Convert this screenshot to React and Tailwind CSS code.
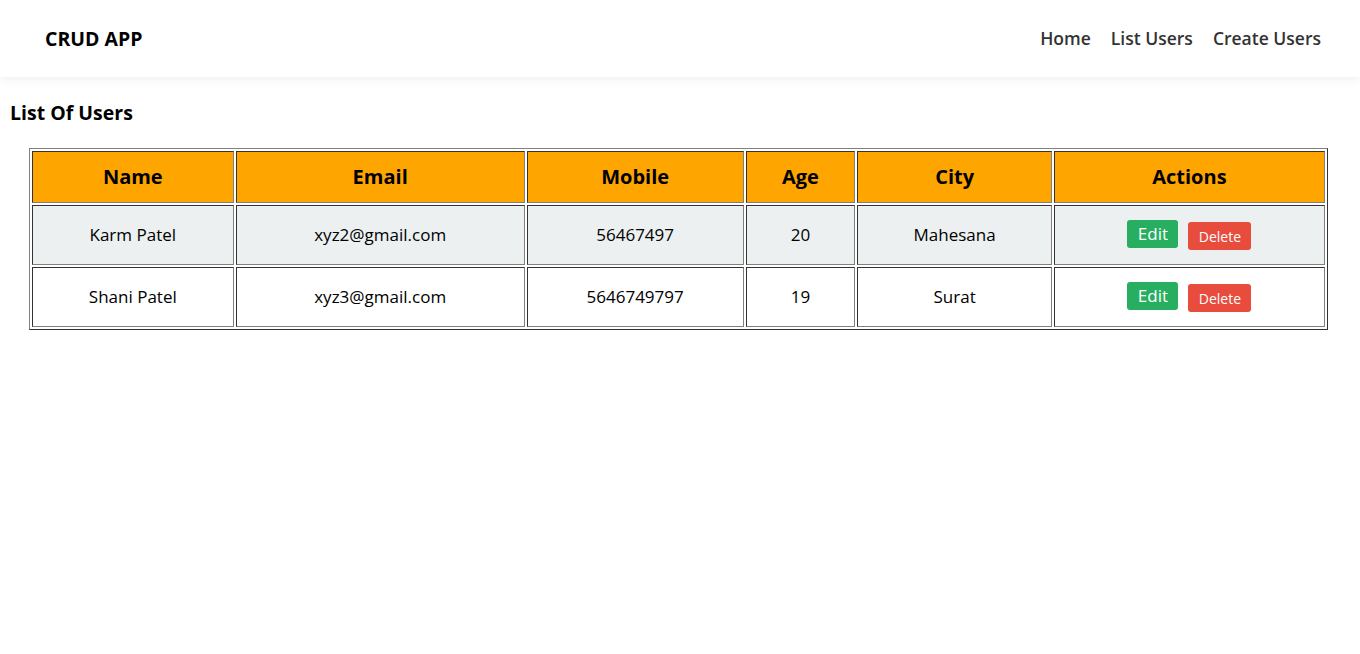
const users = [
  { name: 'Karm Patel', email: 'xyz2@gmail.com', mobile: '56467497', age: 20, city: 'Mahesana' },
  { name: 'Shani Patel', email: 'xyz3@gmail.com', mobile: '5646749797', age: 19, city: 'Surat' }
];

const columns = [
  { label: 'Name', width: 'w-[200px]' },
  { label: 'Email', width: 'w-[287px]' },
  { label: 'Mobile', width: 'w-[215px]' },
  { label: 'Age', width: 'w-[109px]' },
  { label: 'City', width: 'w-[193px]' },
  { label: 'Actions', width: 'w-[269px]' }
];

const cellBorder = 'border border-t-[#333] border-l-[#333] border-b-[#808080] border-r-[#808080]';

export default function App() {
  return (
    <div className="min-h-screen bg-white font-['Open_Sans',sans-serif] text-black">
      {/* Navbar */}
      <nav className="h-[77px] flex items-center justify-between pl-[45px] pr-[39px] bg-white shadow-[0_3px_10px_rgba(0,0,0,0.06)]">
        <span className="text-[19.5px] font-bold">CRUD APP</span>
        <div className="flex items-center gap-[20px] text-[17.5px] font-semibold text-[#333]">
          <a href="#">Home</a>
          <a href="#">List Users</a>
          <a href="#">Create Users</a>
        </div>
      </nav>

      <div className="px-[10px] pt-[22px]">
        <h2 className="text-[19.5px] font-bold leading-[28px]">List Of Users</h2>

        <table className="mt-[21px] ml-[19px] w-[1299px] table-fixed border-separate border-spacing-[2px] border border-t-[#808080] border-l-[#808080] border-b-[#333] border-r-[#333] text-center">
          <thead>
            <tr className="bg-[#ffa500]">
              {columns.map(col => (
                <th key={col.label} className={`${col.width} ${cellBorder} h-[52px] text-[20px] font-bold`}>
                  {col.label}
                </th>
              ))}
            </tr>
          </thead>
          <tbody>
            {users.map((u, i) => (
              <tr key={u.email} className={i === 0 ? 'bg-[#ecf0f1]' : 'bg-white'}>
                <td className={`${cellBorder} h-[60px] text-[17px]`}>{u.name}</td>
                <td className={`${cellBorder} text-[17px]`}>{u.email}</td>
                <td className={`${cellBorder} text-[17px]`}>{u.mobile}</td>
                <td className={`${cellBorder} text-[17px]`}>{u.age}</td>
                <td className={`${cellBorder} text-[17px]`}>{u.city}</td>
                <td className={cellBorder}>
                  <div className="flex items-start justify-center gap-[10px]">
                    <button className="h-[28px] w-[51px] rounded-[3px] bg-[#27ae60] text-[17px] text-white leading-[26px]">
                      Edit
                    </button>
                    <button className="mt-[2px] h-[28px] w-[63px] rounded-[3px] bg-[#e74c3c] text-[14px] text-white">
                      Delete
                    </button>
                  </div>
                </td>
              </tr>
            ))}
          </tbody>
        </table>
      </div>
    </div>
  );
}
